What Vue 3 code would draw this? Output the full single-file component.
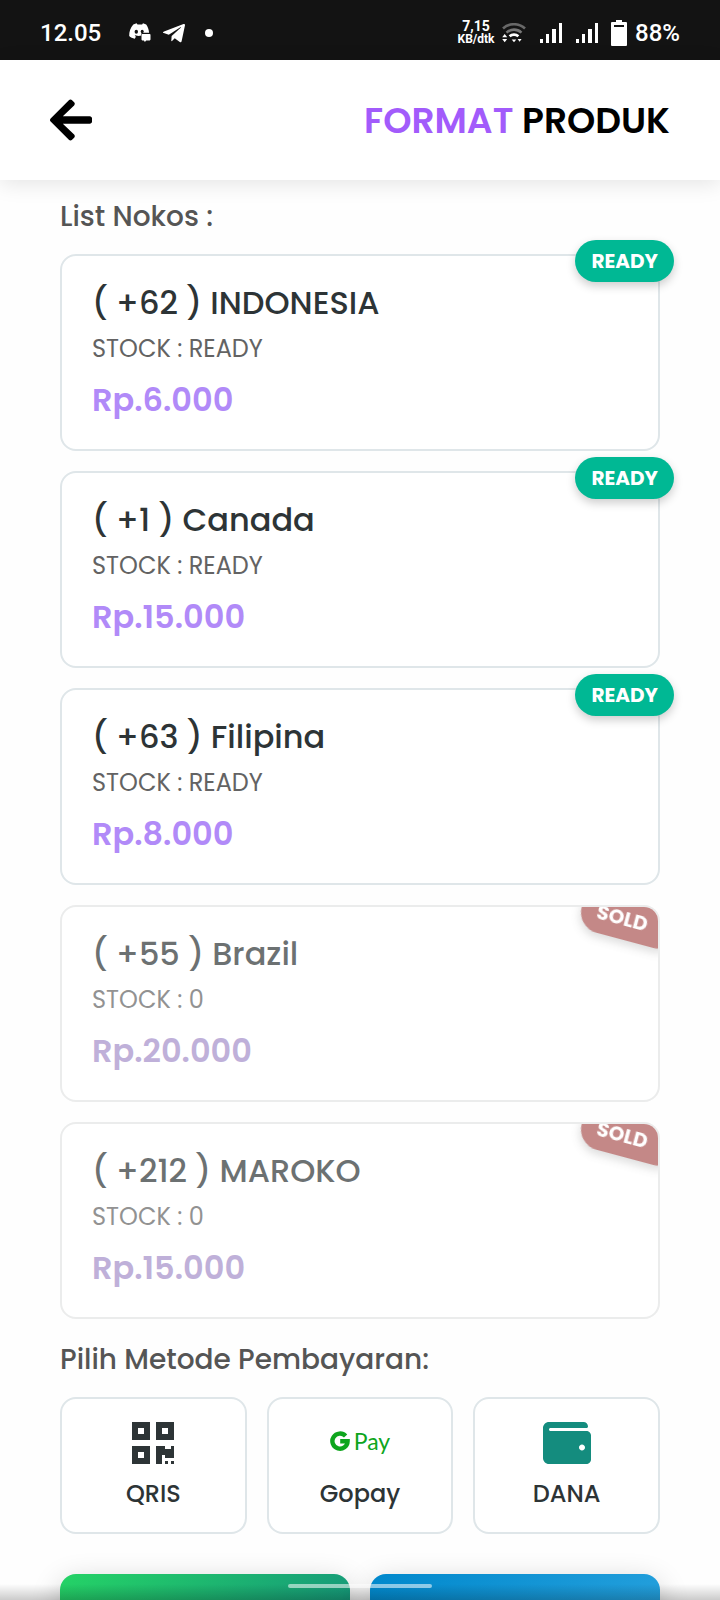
<script setup>
import { ref } from 'vue'

const products = [
  { code: '+62', name: 'INDONESIA', stock: 'READY', price: 'Rp.6.000', ready: true },
  { code: '+1', name: 'Canada', stock: 'READY', price: 'Rp.15.000', ready: true },
  { code: '+63', name: 'Filipina', stock: 'READY', price: 'Rp.8.000', ready: true },
  { code: '+55', name: 'Brazil', stock: '0', price: 'Rp.20.000', ready: false },
  { code: '+212', name: 'MAROKO', stock: '0', price: 'Rp.15.000', ready: false }
]
const selected = ref(null)
const payment = ref(null)
</script>

<template>
  <div class="screen">
    <div class="status">
      <div class="status-left">
        <span class="clock">12.05</span>
        <svg class="discord" width="22" height="20" viewBox="0 0 22 20">
          <path fill="#fff" d="M4.3 1.6 7.6.3l.9 1.1h4.6l.9-1.1 3.2 1.3c1.6 2.3 2.6 5 2.9 8.1h-6.5c-.8 0-1.4.6-1.4 1.4v1.5c-1.4.5-3.6.5-5 0l-.8-.4-.7.7 1.3.6-1.2 2.3C3.6 15.2 1.5 14.4.2 13 .1 8.6 1.5 4.7 4.3 1.6z" />
          <ellipse cx="7.3" cy="8.7" rx="1.7" ry="2" fill="#131313" />
          <ellipse cx="13.2" cy="8.5" rx="1.5" ry="1.8" fill="#131313" />
          <path fill="#fff" d="M13.3 11h7.4c.4 0 .8.3.8.8v4.8c0 .4-.4.8-.8.8h-3.5l-1.3 1.5-1-1.5h-1.6c-.5 0-.8-.4-.8-.8v-4.8c0-.5.3-.8.8-.8z" />
        </svg>
        <svg class="plane" width="22" height="20" viewBox="0 52 448 396">
          <path fill="#fff" d="M446.7 98.6l-67.6 318.8c-5.1 22.5-18.4 28.1-37.3 17.5l-103-75.9-49.7 47.8c-5.5 5.5-10.1 10.1-20.7 10.1l7.4-104.9 190.9-172.5c8.3-7.4-1.8-11.5-12.9-4.1L117.8 284 16.2 252.2c-22.1-6.9-22.5-22.1 4.6-32.7L418.2 66.4c18.4-6.9 34.5 4.1 28.5 32.2z" />
        </svg>
        <span class="dot"></span>
      </div>
      <div class="status-right">
        <div class="speed"><span class="rate">7,15</span><span class="unit">KB/dtk</span></div>
        <svg class="wifi" width="24" height="20" viewBox="0 0 24 20" fill="none">
          <path d="M1 5.5C7-.2 17-.2 23 5.5" stroke="#686868" stroke-width="2.6" />
          <path d="M4.5 9.6c4.5-4 10.5-4 15 0" stroke="#777" stroke-width="2.6" />
          <path d="M7.6 13.3c2.5-2.1 6.3-2.1 8.8 0" stroke="#fff" stroke-width="2.8" />
          <path d="M9.7 16.5h4.6L12 19.3z M.2 14.2h5L2.7 11z M.2 16h5l-2.5 3.2z M15.6 16h4l-2 2.7z" fill="#fff" />
        </svg>
        <svg v-for="n in 2" :key="n" class="signal" width="22" height="20" viewBox="0 0 22 20" fill="#fff">
          <path d="M0 16h3v4H0zM6 11h3v9H6zM12 6h4v14h-4zM19 0h3v20h-3z" />
        </svg>
        <svg class="battery" width="16" height="26" viewBox="0 0 16 26">
          <path fill="#fff" d="M5 0h6v2h4q1 0 1 1v22q0 1-1 1H1q-1 0-1-1V3q0-1 1-1h4z" />
          <path fill="#131313" d="M3 5h10v2H3z" />
        </svg>
        <span class="percent">88%</span>
      </div>
    </div>

    <header class="header">
      <button class="back" type="button" aria-label="Kembali">
        <svg width="42" height="42" viewBox="0 32 448 448">
          <path d="M257.5 445.1l-22.2 22.2c-9.4 9.4-24.6 9.4-33.9 0L7 273c-9.4-9.4-9.4-24.6 0-33.9L201.4 44.7c9.4-9.4 24.6-9.4 33.9 0l22.2 22.2c9.5 9.5 9.3 25-.4 34.3L136.6 216H424c13.3 0 24 10.7 24 24v32c0 13.3-10.7 24-24 24H136.6l120.5 114.8c9.8 9.3 10 24.8.4 34.3z" />
        </svg>
      </button>
      <h1 class="brand"><span>FORMAT</span> PRODUK</h1>
    </header>

    <main class="content">
      <h2 class="label">List Nokos :</h2>
      <div class="products">
        <button
          v-for="p in products"
          :key="p.code"
          type="button"
          class="card"
          :class="{ sold: !p.ready }"
          :disabled="!p.ready"
          @click="selected = p.code"
        >
          <span class="name">( {{ p.code }} ) {{ p.name }}</span>
          <span class="stock">STOCK : {{ p.stock }}</span>
          <span class="price">{{ p.price }}</span>
          <span class="badge">{{ p.ready ? 'READY' : 'SOLD' }}</span>
        </button>
      </div>

      <h2 class="label">Pilih Metode Pembayaran:</h2>
      <div class="methods">
        <button type="button" class="method" @click="payment = 'qris'">
          <span class="icon">
            <svg width="42" height="42" viewBox="0 32 448 448" fill="#2d3436">
              <path d="M0 224h192V32H0v192zM64 96h64v64H64V96zm192-64v192h192V32H256zm128 128h-64V96h64v64zM0 480h192V288H0v192zm64-128h64v64H64v-64zm352-64h32v128h-96v-32h-32v96h-64V288h96v32h64v-32zm0 160h32v32h-32v-32zm-64 0h32v32h-32v-32z" />
            </svg>
          </span>
          <span class="caption">QRIS</span>
        </button>
        <button type="button" class="method" @click="payment = 'gopay'">
          <span class="icon gpay">
            <svg width="20" height="20" viewBox="0 0 20 20" fill="none">
              <path d="M15.6 5A7.6 7.6 0 1 0 17.6 10.3H10.2" stroke="#0ea51d" stroke-width="4.4" />
            </svg>
            <span>Pay</span>
          </span>
          <span class="caption">Gopay</span>
        </button>
        <button type="button" class="method" @click="payment = 'dana'">
          <span class="icon">
            <svg width="48" height="42" viewBox="0 32 512 448" fill="#148c7e">
              <path d="M461.2 128H80c-8.84 0-16-7.16-16-16s7.16-16 16-16h384c8.84 0 16-7.16 16-16 0-26.51-21.49-48-48-48H64C28.65 32 0 60.65 0 96v320c0 35.35 28.65 64 64 64h397.2c28.02 0 50.8-21.53 50.8-48V176c0-26.47-22.78-48-50.8-48zM416 336c-17.67 0-32-14.33-32-32s14.33-32 32-32 32 14.33 32 32-14.33 32-32 32z" />
            </svg>
          </span>
          <span class="caption">DANA</span>
        </button>
      </div>

      <div class="actions">
        <button type="button" class="action green" aria-label="WhatsApp"></button>
        <button type="button" class="action blue" aria-label="Telegram"></button>
      </div>
    </main>

    <div class="bottom-fade"></div>
    <div class="home-pill"></div>
  </div>
</template>

<style>
body {
  margin: 0;
  background: #fefefe;
}
</style>

<style scoped>
.screen {
  position: relative;
  height: 100vh;
  overflow: hidden;
  background: #fefefe;
  font-family: Poppins, Inter, "Noto Sans", sans-serif;
  color: #2d3436;
}
button {
  font-family: inherit;
  color: inherit;
  cursor: pointer;
}
svg {
  display: block;
  flex: none;
}
.status {
  display: flex;
  justify-content: space-between;
  align-items: center;
  height: 60px;
  padding: 5px 40px 0;
  box-sizing: border-box;
  background: #131313;
  color: #fff;
  font-family: Roboto, sans-serif;
  font-size: 24px;
  font-weight: 500;
}
.status-left,
.status-right {
  display: flex;
  align-items: center;
}
.discord { margin-left: 28px; }
.plane { margin-left: 12px; }
.dot {
  width: 8px;
  height: 8px;
  margin-left: 20px;
  border-radius: 50%;
  background: #fff;
}
.speed {
  display: flex;
  flex-direction: column;
  align-items: center;
  width: 36px;
  font-weight: 700;
  line-height: 13px;
}
.rate { font-size: 14px; }
.unit { font-size: 12px; }
.wifi { margin-left: 8px; }
.signal { margin-left: 14px; }
.battery { margin: 0 8px 0 13px; }
.header {
  display: flex;
  justify-content: space-between;
  align-items: center;
  height: 120px;
  padding: 0 50px;
  background: #fff;
  box-shadow: 0 4px 20px rgba(0, 0, 0, 0.1);
}
.back {
  padding: 0;
  border: 0;
  background: none;
}
.brand {
  margin: 0;
  font-size: 36px;
  font-weight: 600;
  color: #000;
}
.brand span { color: #a25bfb; }
.content { padding: 16px 60px 0; }
.label {
  margin: 0 0 16px;
  font-size: 28px;
  font-weight: 500;
  line-height: 42px;
  color: #555;
}
.products {
  display: grid;
  gap: 20px;
  margin-bottom: 20px;
}
.card {
  position: relative;
  display: flex;
  flex-direction: column;
  align-items: flex-start;
  padding: 22px 30px 25px;
  border: 2px solid #dfe6e9;
  border-radius: 16px;
  background: #fff;
  text-align: left;
}
.name {
  font-size: 32px;
  font-weight: 500;
  line-height: 50px;
}
.stock {
  font-size: 24px;
  font-weight: 400;
  line-height: 42px;
  color: #636363;
}
.price {
  margin-top: 6px;
  font-size: 32px;
  font-weight: 600;
  line-height: 48px;
  color: #b18af8;
}
.badge {
  position: absolute;
  top: -16px;
  right: -16px;
  padding: 0 16px;
  border-radius: 21px;
  background: #00b894;
  box-shadow: 0 4px 10px rgba(0, 0, 0, 0.2);
  color: #fff;
  font-size: 20px;
  font-weight: 700;
  line-height: 42px;
}
.sold {
  overflow: hidden;
  border-color: #e3e4e4;
  opacity: 0.7;
  cursor: default;
}
.sold .price { color: #a48ec9; }
.sold .badge {
  top: -8px;
  right: -22px;
  padding-right: 32px;
  background: #ab5553;
  transform: rotate(15deg);
}
.methods {
  display: grid;
  grid-template-columns: repeat(3, 1fr);
  gap: 20px;
}
.method {
  display: flex;
  flex-direction: column;
  align-items: center;
  padding: 22px 10px 19px;
  border: 2px solid #dfe6e9;
  border-radius: 16px;
  background: #fff;
}
.icon {
  display: flex;
  align-items: center;
  height: 44px;
}
.gpay {
  gap: 4px;
  padding-bottom: 4px;
  box-sizing: border-box;
  color: #0ea51d;
  font-family: Lato, sans-serif;
  font-size: 23px;
}
.caption {
  margin-top: 10px;
  font-size: 24px;
  font-weight: 500;
  line-height: 38px;
}
.actions {
  display: grid;
  grid-template-columns: 1fr 1fr;
  gap: 20px;
  margin-top: 40px;
}
.action {
  height: 100px;
  border: 0;
  border-radius: 16px;
  box-shadow: 0 8px 30px rgba(0, 0, 0, 0.2);
}
.green { background: linear-gradient(135deg, #25d366, #128c7e); }
.blue { background: linear-gradient(135deg, #0088cc, #2ca5e0); }
.bottom-fade {
  position: absolute;
  right: 0;
  bottom: 0;
  left: 0;
  height: 16px;
  background: linear-gradient(rgba(0, 0, 0, 0), rgba(0, 0, 0, 0.2));
}
.home-pill {
  position: absolute;
  bottom: 12px;
  left: 40%;
  width: 20%;
  height: 4px;
  border-radius: 2px;
  background: rgba(255, 255, 255, 0.55);
}
</style>
